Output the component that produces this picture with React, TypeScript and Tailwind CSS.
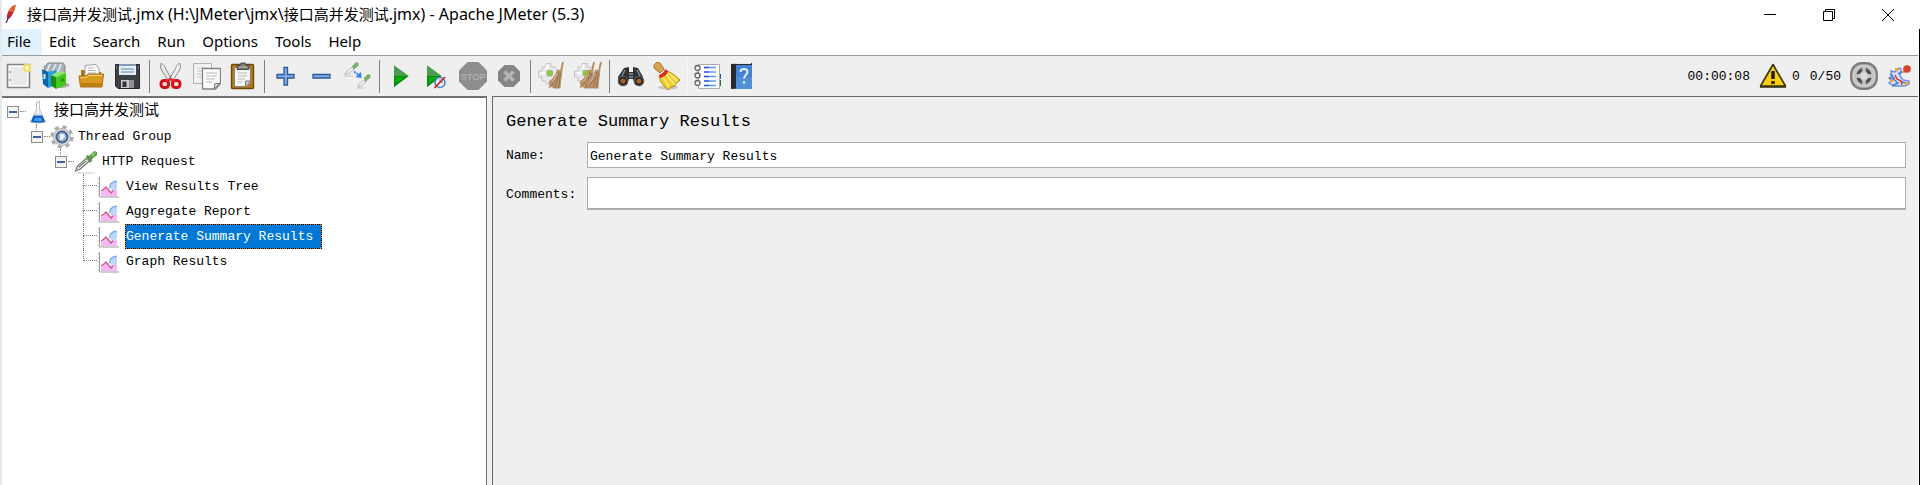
import React from 'react';

const mono = "font-['Liberation_Mono','Noto_Sans_CJK_SC',monospace]";
const sans = "font-['Noto_Sans','Noto_Sans_CJK_SC',sans-serif]";

function Icon({ children }: { children: React.ReactNode }) {
  return (
    <svg viewBox="0 0 28 28" className="h-7 w-7 shrink-0" aria-hidden="true">
      {children}
    </svg>
  );
}

const NewIcon = () => (
  <Icon>
    <path d="M1.500 2.500h22v23h-22z" fill="#f4f4f4" stroke="#858585" strokeWidth="1.600" />
    <path d="M3.500 4.500h18v19h-18z" fill="#e9e9ea" stroke="#fff" />
    <path d="M4 9v2M4 17v2" stroke="#999" strokeWidth="1.500" />
    <circle cx="21" cy="6" r="4.600" fill="#f5eb9a" opacity=".8" />
    <circle cx="21" cy="6" r="2.700" fill="#fffef0" stroke="#efe04e" strokeWidth="1.600" />
  </Icon>
);

const TemplatesIcon = () => (
  <Icon>
    <ellipse cx="18" cy="23" rx="9.500" ry="3" fill="#777" opacity=".55" />
    <path d="M2 5l4-4h15l2 3v9H4z" fill="#a8b2b8" stroke="#7d878c" />
    <path d="M5 9l3-7M10 10l4-8M16 10l3-8" stroke="#e9eef0" strokeWidth="1.600" />
    <path d="M0 7l6 3v16l-5-4z" fill="#0b62a8" />
    <path d="M6 10l8-2v15l-8 3z" fill="#2a9add" />
    <path d="M2.500 12v5" stroke="#d7eefb" strokeWidth="2" />
    <path d="M9 13l5 2v12l-5-4z" fill="#1c8a0e" />
    <path d="M14 15l10-4v12l-10 4z" fill="#43c91d" />
    <path d="M9 13l9-4 6 2-10 4z" fill="#90e66f" />
    <path d="M19 17l3-1v3l-3 1z" fill="#23940e" />
  </Icon>
);

const OpenIcon = () => (
  <Icon>
    <path d="M3 8h5l2 2h13v9H3z" fill="#a8741a" />
    <path d="M7 3.500l11-1 3 4v10H7z" fill="#fafafa" stroke="#a2a2a2" />
    <path d="M10 6h6M10 8.500h8M10 11h8M10 13.500h8" stroke="#b5b5b5" />
    <path d="M1 14h7l2-2h15.500l-1.500 13H2.500z" fill="#d99a22" stroke="#aa7112" />
    <path d="M2.500 15.500h6l2-2H24" stroke="#f7d37c" fill="none" />
    <path d="M3 21h21l-.5 4H3z" fill="#bf8013" />
  </Icon>
);

const SaveIcon = () => (
  <Icon>
    <path d="M1.500 2.500h24v24H4l-2.500-2.500z" fill="#3c4045" stroke="#26282b" />
    <path d="M5 2h17v11H5z" fill="#e7eef5" />
    <path d="M5 2h17v2H5z" fill="#7e9bbd" />
    <path d="M7 7h13M7 10h13" stroke="#88a7c7" strokeWidth="1.400" />
    <path d="M7 18h13v8H7z" fill="#c9c9c9" />
    <path d="M8.500 19.500h4V25h-4z" fill="#303338" />
    <path d="M15 18h5v8h-5z" fill="#8d8f92" />
    <path d="M2.500 4v3M24.500 4v3" stroke="#73777c" />
  </Icon>
);

const CutIcon = () => (
  <Icon>
    <ellipse cx="15" cy="25" rx="10" ry="2" fill="#bbb" opacity=".5" />
    <path d="M4 1.500c2 0 4 3 5 6l6 10-3 2L5 9C3.500 6 3 4 4 1.500z" fill="#e5e7e5" stroke="#898c89" />
    <path d="M23 1.500c-2 0-4 3-5 6l-6 10 3 2L22 9c1.500-3 2-5 1-7.500z" fill="#efefef" stroke="#898c89" />
    <circle cx="13.500" cy="14.500" r="1" fill="#777" />
    <rect x="4" y="18.500" width="7.500" height="7" rx="3" fill="#f3d9d9" stroke="#d01118" strokeWidth="3" />
    <rect x="15.500" y="18.500" width="7.500" height="7" rx="3" fill="#f3d9d9" stroke="#d01118" strokeWidth="3" />
    <path d="M9 19l4.500-2 4.500 2" fill="none" stroke="#e42a2d" strokeWidth="2.500" />
  </Icon>
);

const CopyIcon = () => (
  <Icon>
    <path d="M.5 1.500h18v20H.5z" fill="#f1f1f1" stroke="#b2b2b2" />
    <path d="M4 6h11M4 9h8M4 12h5M4 15h5" stroke="#c9c9c9" />
    <path d="M9.500 6.500h18v15l-5 5.500h-13z" fill="#fafafa" stroke="#858585" strokeWidth="1.300" />
    <path d="M13 11h11M13 14h11M13 17h9M13 20h6" stroke="#b7b7b7" strokeWidth="1.200" />
    <path d="M27 21.500h-5l-1 5.500z" fill="#dcdcd8" stroke="#777" />
  </Icon>
);

const PasteIcon = () => (
  <Icon>
    <rect x="2.500" y="2.500" width="22" height="24" rx="1" fill="#b57a1f" stroke="#714706" strokeWidth="1.400" />
    <path d="M5.500 5.500h16v15l-4 4h-12z" fill="#f5f5f3" stroke="#85857f" />
    <path d="M9 11h9M9 14h9M9 17h7M9 20h4" stroke="#b8b8b4" strokeWidth="1.200" />
    <path d="M21.500 19h-5v5z" fill="#d2d2ce" stroke="#777" />
    <path d="M8 3.500h3L12 1h4l1 2.500h3v4H8z" fill="#777a74" stroke="#484a45" />
    <path d="M10 5h8" stroke="#c7c9c4" />
  </Icon>
);

const PlusIcon = () => (
  <Icon>
    <path d="M12 5.500h3.500v7H22V16h-6.500v7H12v-7H5v-3.500h7z" fill="#86aede" stroke="#29599f" strokeWidth="1.300" />
  </Icon>
);

const MinusIcon = () => (
  <Icon>
    <path d="M5 12.500h17V16H5z" fill="#86aede" stroke="#29599f" strokeWidth="1.300" />
  </Icon>
);

const ToggleIcon = () => (
  <Icon>
    <path d="M0 14h9M13 26h8" stroke="#c4c4c4" />
    <path d="M1 12.500l1-2.500 6-5 2 2-5 4.500z" fill="#eff2ef" stroke="#b8b8b8" />
    <path d="M8 4l1.500-1 2.500-3 2.500 1v2.500L11 6.500l-1 1.500z" fill="#7cac6d" />
    <path d="M14 25l1-3 5-4 2 2-5 4z" fill="#eff2ef" stroke="#b8b8b8" />
    <path d="M19.500 16l1.500-1 3-3 2.500 1v2.500L23 18.500l-1 1.500z" fill="#75b263" />
    <path d="M10 9.500l4 3" stroke="#2d7ff0" strokeWidth="1.800" strokeDasharray="2 1" />
    <path d="M17 10l.5 6-6-1z" fill="#2d7ff0" />
  </Icon>
);

const PlayShape = () => (
  <>
    <path d="M7 3.500L21.500 14 7 25z" fill="#159522" />
    <path d="M7 3.500L21.500 14H7z" fill="#4a9d50" />
    <path d="M7 14h14.500L7 25z" fill="#078a0b" />
    <path d="M8.500 15h9l-9 7z" fill="#0bad12" />
  </>
);

const StartIcon = () => (
  <Icon>
    <PlayShape />
  </Icon>
);

const StartNoPauseIcon = () => (
  <Icon>
    <g transform="translate(-3 0)">
      <PlayShape />
    </g>
    <circle cx="17" cy="20.500" r="5" fill="#e8f0fa" stroke="#5285c2" strokeWidth="1.600" />
    <path d="M17 17v3h3" stroke="#5c86c2" fill="none" />
    <path d="M11.500 26L22 15" stroke="#d32029" strokeWidth="1.800" />
  </Icon>
);

const StopIcon = () => (
  <Icon>
    <path d="M8.500 0h11L28 8.500v11L19.500 28h-11L0 19.500v-11z" fill="#8e8e8e" />
    <text x="14" y="18" textAnchor="middle" fontSize="9" fontWeight="700" fill="#b0b0b0" className="font-['Liberation_Sans',sans-serif]">
      STOP
    </text>
  </Icon>
);

const ShutdownIcon = () => (
  <Icon>
    <path d="M9.500 3h9l6.500 6.500v9L18.500 25h-9L3 18.500v-9z" fill="#858585" />
    <path d="M9.500 9.500l9 9M18.500 9.500l-9 9" stroke="#b4b4b4" strokeWidth="3.600" />
  </Icon>
);

const Gear = () => (
  <>
    <path d="M8 1.500h5V5h4l2 2v9l-3 2-3 1v3H8v-3H4v-4H.5V9H4V5h4z" fill="#e9e9e9" stroke="#c4c4c4" />
    <path d="M9 3v4M3 11h4" stroke="#fff" strokeWidth="2" />
    <rect x="9" y="8.500" width="5.500" height="5.500" rx="1" fill="#86d11a" stroke="#a9aca2" />
  </>
);

const Broom = () => (
  <>
    <path d="M25 0l-2 9" stroke="#b98a56" strokeWidth="1.800" />
    <path d="M19.500 7.500l5 1-1.500 11-.5 7h-7l-1.500-1.500-3.500 1c1-2 1-4 0-6 4-3 7-7 9-12.500z" fill="#b8936a" />
    <path d="M21 10l-4 16M22.500 11l-2 15M19 14l-5.500 10" stroke="#8a6946" strokeWidth=".8" />
    <path d="M19.500 12l-5 8" stroke="#dcbf9f" />
  </>
);

const ClearIcon = () => (
  <Icon>
    <Gear />
    <Broom />
  </Icon>
);

const ClearAllIcon = () => (
  <Icon>
    <Gear />
    <g transform="translate(-5 0)">
      <Broom />
    </g>
    <g transform="translate(2 0)">
      <Broom />
    </g>
  </Icon>
);

const SearchIcon = () => (
  <Icon>
    <path d="M7 6l5-1v5h4V5l5 1 5 9v6l-3 2h-5l-2-6h-4l-2 6H4l-3-2v-6z" fill="#303236" />
    <circle cx="6" cy="19" r="4.500" fill="#17191b" stroke="#55585b" strokeWidth="1.500" />
    <circle cx="22" cy="19" r="4.500" fill="#17191b" stroke="#55585b" strokeWidth="1.500" />
    <circle cx="6" cy="19" r="2.600" fill="#a8602a" />
    <circle cx="22" cy="19" r="2.600" fill="#a8602a" />
    <path d="M8 8L5 14M20 8l3 6M12 12h4M12 15h4" stroke="#8c8f92" strokeWidth="1.400" />
  </Icon>
);

const ResetSearchIcon = () => (
  <Icon>
    <ellipse cx="15" cy="25.500" rx="10" ry="2" fill="#999" opacity=".5" />
    <path d="M1 3l3-3 3 1 4 6-4 4-6-5z" fill="#d9a354" stroke="#aa732b" />
    <path d="M13 9c6 1 9 5 14 9l-4 3-1 3-4 1-3 3C11 24 7 20 6 14z" fill="#efcf2d" stroke="#b18b0c" />
    <path d="M13 12l9 11M16 11l8 8M10 15l6 10" stroke="#fbf08a" strokeWidth="1.300" />
    <path d="M6 13c4-1 5-3 6-6l3 2c-1 4-4 6-8 7z" fill="#dc2626" />
  </Icon>
);

const FunctionIcon = () => (
  <Icon>
    <path d="M24 12h3v5h-3z" fill="#1656c7" />
    <path d="M24 18h3v6h-3z" fill="#138424" />
    <path d="M4.500 2.500h21v24h-21z" fill="#fbfbfb" stroke="#aaa" />
    {[5.5, 10, 14.5, 19, 23.5].map((y) => (
      <g key={y}>
        <path d={`M10 ${y}h5`} stroke="#1e50d0" strokeWidth="1.500" />
        <path d={`M15 ${y}h7`} stroke="#5b9cf0" strokeWidth="1.500" />
      </g>
    ))}
    {[6, 13.5, 21].map((y) => (
      <circle key={y} cx="3.500" cy={y} r="2.500" fill="#eee" stroke="#656565" strokeWidth="1.300" />
    ))}
  </Icon>
);

const HelpIcon = () => (
  <Icon>
    <path d="M1 2l21-1v25l-21 1z" fill="#27292e" />
    <path d="M6 3h16v24H6z" fill="#4383d1" />
    <path d="M6 1.500h15" stroke="#e6e6e6" />
    <path d="M6 15h16v12H6z" fill="#528fd9" />
    <path d="M10.500 10c0-4 7-4 7 0 0 3-3.500 3-3.500 6.500M14 19v2.500" fill="none" stroke="#e8f1fb" strokeWidth="1.900" />
  </Icon>
);

const WarningIcon = () => (
  <Icon>
    <path d="M14 2.500L26.500 24h-25z" fill="#f6cd12" stroke="#3b3508" strokeWidth="1.600" strokeLinejoin="round" />
    <path d="M1 25h26" stroke="#282407" strokeWidth="1.500" />
    <path d="M14 9v8M14 19v3" stroke="#1c1c1c" strokeWidth="3.400" />
  </Icon>
);

const ThreadsIcon = () => (
  <Icon>
    <rect x="1" y="1" width="26" height="26" rx="11" fill="#a4a4a4" stroke="#7a7a7a" strokeWidth="1.800" />
    <rect x="3.500" y="3.500" width="21" height="21" rx="9" fill="#c4c4c4" stroke="#dcdcdc" />
    <path d="M7 12c.5-2.500 2-4.500 5-5.500l-.5 3-2 2zM16 6.500c3 1 4.500 3 5 5.500l-3-.5-1.500-2zM21 16c-.5 2.500-2 4.500-5 5.500l.5-3 2-2zM12 21.500c-3-1-4.500-3-5-5.500l3 .5 1.500 2z" fill="#4b4b4b" stroke="#4b4b4b" strokeWidth=".8" />
    <circle cx="14" cy="14" r="3.500" fill="#dcdcdc" />
  </Icon>
);

const RemoteIcon = () => (
  <Icon>
    <path d="M5 9l4 1 4-4 2 1-1 7 3 4 6 1v3l-4 2H8l-5-3 3-3-3-2 3-2z" fill="#d3e0f6" stroke="#6b92dc" strokeWidth="1.400" />
    <path d="M3 17l5-1-4-4M6 24l6-3-6-5M12 12l6-3M15 20l6 1" stroke="#4a78d2" strokeWidth="1.400" fill="none" />
    <path d="M9 13l2 4 4 2 1 4" stroke="#db353b" strokeWidth="1.400" fill="none" />
    <path d="M9 6h3v3H9zM19 20h3v3h-3zM4 17h3v3H4zM16 9h3v2h-3z" fill="#eda23c" />
    <circle cx="21" cy="7" r="3.800" fill="#d44431" />
  </Icon>
);

const Feather = () => (
  <svg viewBox="0 0 14 22" className="h-[22px] w-[14px]" aria-hidden="true">
    <path d="M4 19l2-4" stroke="#5b2766" strokeWidth="1.200" />
    <path d="M5 16V11l1.500-4L10 2.500l3.500-2-.5 4-2 5-2.500 4z" fill="#c3253b" />
    <path d="M6.500 7L10 2.500l3.500-2-.5 4-1.500 4z" fill="#e8622c" />
    <path d="M5 16v-4l3 1z" fill="#83236b" />
  </svg>
);

function TreeIcon({ children }: { children: React.ReactNode }) {
  return (
    <svg viewBox="0 0 24 24" className="relative h-6 w-6 shrink-0" aria-hidden="true">
      {children}
    </svg>
  );
}

const FlaskIcon = () => (
  <TreeIcon>
    <ellipse cx="12" cy="21.500" rx="8.500" ry="1.800" fill="#aeb6c0" />
    <path d="M10.500 2l3-1v8l5 12-2 1.500h-9l-2-1.500 5-12z" fill="#dce4ea" stroke="#b0bac1" strokeWidth=".8" />
    <path d="M7.500 15.500h9l2.500 5.500-2 1.500H7L5 21z" fill="#1763c7" />
    <path d="M9 18h6l1 3H8z" fill="#3ea2ef" />
    <path d="M12 3v10" stroke="#fff" strokeWidth="1.200" />
  </TreeIcon>
);

const GearIcon = () => (
  <TreeIcon>
    <circle cx="12" cy="12" r="9.800" fill="none" stroke="#ababab" strokeWidth="3.500" strokeDasharray="4.100 3.600" />
    <circle cx="12" cy="12" r="8.500" fill="#d8d8d8" stroke="#b4b4b4" />
    <circle cx="12" cy="12" r="5.600" fill="#94add0" stroke="#43618c" strokeWidth="1.800" />
    <path d="M10 9h4l1 3-3 3h-2z" fill="#edf3fa" />
  </TreeIcon>
);

const PipetteIcon = () => (
  <TreeIcon>
    <path d="M2 23h19" stroke="#ccc" />
    <path d="M1.500 21l2-5 9-8 3 3-9 8z" fill="#d9dcd9" stroke="#777" strokeWidth="1.200" />
    <path d="M5 17l7-6" stroke="#555" />
    <path d="M12 6l2-1 1 1 5-5 3 1v3l-5 4v2l-2 2z" fill="#58984a" />
    <path d="M17 5l3-3 2 1-3 4z" fill="#83c96d" />
  </TreeIcon>
);

const ChartIcon = () => (
  <TreeIcon>
    <path d="M2.500 2v20H22" fill="none" stroke="#999" />
    <path d="M.5 4h2M.5 8h2M.5 12h2M.5 16h2M.5 20h2" stroke="#bbb" />
    <path d="M4 17l5-4 5 6 4-7 2 3v6H4z" fill="#f6b8f3" />
    <path d="M4 16l3-2 2-2 5 6 5-6" fill="none" stroke="#cf5a90" strokeWidth="1.500" />
    <path d="M13 9l4-3h3v7l-3 3-3-1z" fill="#bcd7f8" />
    <path d="M12.500 13.500l1-4.500L17 6.500h3" fill="none" stroke="#7eaaf0" strokeWidth="1.300" />
  </TreeIcon>
);

function ToolButton({ label, children }: { label: string; children: React.ReactNode }) {
  return (
    <button type="button" aria-label={label} className="flex h-9 w-9 items-center justify-center">
      {children}
    </button>
  );
}

const toolGroups: { label: string; icon: React.ReactNode }[][] = [
  [
    { label: 'New', icon: <NewIcon /> },
    { label: 'Templates', icon: <TemplatesIcon /> },
    { label: 'Open', icon: <OpenIcon /> },
    { label: 'Save', icon: <SaveIcon /> },
  ],
  [
    { label: 'Cut', icon: <CutIcon /> },
    { label: 'Copy', icon: <CopyIcon /> },
    { label: 'Paste', icon: <PasteIcon /> },
  ],
  [
    { label: 'Expand All', icon: <PlusIcon /> },
    { label: 'Collapse All', icon: <MinusIcon /> },
    { label: 'Toggle', icon: <ToggleIcon /> },
  ],
  [
    { label: 'Start', icon: <StartIcon /> },
    { label: 'Start no pauses', icon: <StartNoPauseIcon /> },
    { label: 'Stop', icon: <StopIcon /> },
    { label: 'Shutdown', icon: <ShutdownIcon /> },
  ],
  [
    { label: 'Clear', icon: <ClearIcon /> },
    { label: 'Clear All', icon: <ClearAllIcon /> },
  ],
  [
    { label: 'Search', icon: <SearchIcon /> },
    { label: 'Reset Search', icon: <ResetSearchIcon /> },
  ],
  [
    { label: 'Function Helper', icon: <FunctionIcon /> },
    { label: 'Help', icon: <HelpIcon /> },
  ],
];

const branches = [
  { label: '接口高并发测试', icon: <FlaskIcon />, indent: 'pl-[5px]', text: 'text-[15px]' },
  { label: 'Thread Group', icon: <GearIcon />, indent: 'pl-[29px]', text: 'text-[13px]' },
  { label: 'HTTP Request', icon: <PipetteIcon />, indent: 'pl-[53px]', text: 'text-[13px]' },
];

const leaves = ['View Results Tree', 'Aggregate Report', 'Generate Summary Results', 'Graph Results'];

export default function App() {
  return (
    <div className={`flex min-h-screen flex-col border-l-2 border-[#e6e8ec] bg-white text-black ${sans}`}>
      <header className="flex h-[29px] items-center">
        <Feather />
        <h1 className="grow pb-0.5 pl-[11px] text-[16px] leading-6">
          <span className="text-[15px]">接口高并发测试</span>.jmx (H:\JMeter\jmx\
          <span className="text-[15px]">接口高并发测试</span>.jmx) - Apache JMeter (5.3)
        </h1>
        <div className="mr-[3px] flex">
          <button type="button" aria-label="Minimize" className="flex h-7 w-[59px] items-center justify-center">
            <svg viewBox="0 0 12 12" className="h-3 w-3"><path d="M0 5.500h12" stroke="#000" /></svg>
          </button>
          <button type="button" aria-label="Restore" className="flex h-7 w-[59px] items-center justify-center">
            <svg viewBox="0 0 12 12" className="h-3 w-3"><path d="M.5 2.500h9v9h-9zM2.500 2.500v-2h9v9h-2" fill="none" stroke="#000" /></svg>
          </button>
          <button type="button" aria-label="Close" className="flex h-7 w-[59px] items-center justify-center">
            <svg viewBox="0 0 12 12" className="h-3 w-3"><path d="M0 0l12 12M12 0L0 12" stroke="#000" /></svg>
          </button>
        </div>
      </header>

      <div className="flex grow flex-col border-r border-black">
        <nav className="flex h-[26px] text-[15px] leading-6">
          {['File', 'Edit', 'Search', 'Run', 'Options', 'Tools', 'Help'].map((item) => (
            <button
              key={item}
              type="button"
              className={item === 'File' ? 'bg-[#e2f2ff] pr-[11px] pb-[3px] pl-[5px]' : 'pr-[10px] pb-[3px] pl-[7px]'}
            >
              {item}
            </button>
          ))}
        </nav>

        <div className="mr-px flex h-[41px] items-center border-t border-[#9a9a9a] bg-[#efefef]">
          {toolGroups.map((group, i) => (
            <React.Fragment key={group[0].label}>
              {i > 0 && (
                <span
                  className={
                    i === toolGroups.length - 1 ? 'mx-0.5 h-[33px] w-px bg-[#f8f8f8]' : 'mx-[3px] h-[33px] w-px bg-[#808080]'
                  }
                />
              )}
              {group.map((tool) => (
                <ToolButton key={tool.label} label={tool.label}>
                  {tool.icon}
                </ToolButton>
              ))}
            </React.Fragment>
          ))}
          <div className={`ml-auto flex items-center pr-1 text-[13px] ${mono}`}>
            <span className="pt-0.5">00:00:08</span>
            <button type="button" aria-label="Warnings" className="ml-[9px]"><WarningIcon /></button>
            <span className="ml-[5px] pt-0.5">0</span>
            <span className="ml-[10px] pt-0.5">0/50</span>
            <span className="ml-[9px]"><ThreadsIcon /></span>
            <span className="ml-2"><RemoteIcon /></span>
          </div>
        </div>

        <main className="mr-px flex grow bg-[#efefef]">
          <aside className="w-[485px] shrink-0 border-t-2 border-r border-[#6e6e74] bg-white pt-px">
            <ul className={mono}>
              {branches.map((row, i) => (
                <li key={row.label} className={`flex h-[25px] items-center ${row.indent}`}>
                  <button
                    type="button"
                    aria-label={`Collapse ${row.label}`}
                    className="flex h-3 w-3 items-center justify-center border border-[#8c8c8c] bg-[#f3f3f3]"
                  >
                    <span className="h-0.5 w-2 bg-[#3c5fa8]" />
                  </button>
                  <span className="ml-px w-[6px] border-t border-dotted border-[#808080]" />
                  <span className="relative flex">
                    {i < 2 && <span className="absolute top-6 left-[10px] h-2 border-l border-dotted border-[#808080]" />}
                    {row.icon}
                  </span>
                  <button type="button" className={`ml-1 pt-px leading-6 whitespace-pre ${row.text}`}>
                    {row.label}
                  </button>
                </li>
              ))}
              {leaves.map((label, i) => (
                <li key={label} className="flex h-[25px] items-center pl-[81px]">
                  <span className="flex h-full w-[14px] flex-col">
                    <span className="h-3 border-b border-l border-dotted border-[#808080]" />
                    {i < leaves.length - 1 && <span className="grow border-l border-dotted border-[#808080]" />}
                  </span>
                  <ChartIcon />
                  <button
                    type="button"
                    className={
                      label === 'Generate Summary Results'
                        ? 'ml-1 h-[25px] border border-dashed border-[#ff8a22] bg-[#0078d7] pr-2 text-[13px] whitespace-pre text-white outline-1 -outline-offset-1 outline-dotted outline-black'
                        : 'ml-1 h-[25px] border border-transparent pr-2 text-[13px] whitespace-pre'
                    }
                  >
                    {label}
                  </button>
                </li>
              ))}
            </ul>
          </aside>

          <section className={`ml-[5px] grow border-t border-l border-[#6a6a6a] pt-[13px] pr-3 pl-[13px] ${mono}`}>
            <h2 className="text-[17px] leading-6">Generate Summary Results</h2>
            <form className="mt-2 grid grid-cols-[73px_1fr] items-center gap-x-2 gap-y-[9px] text-[13px]">
              <label htmlFor="name" className="pt-0.5">Name:</label>
              <input
                id="name"
                defaultValue="Generate Summary Results"
                className="h-[26px] w-full border border-[#abadb3] bg-white px-0.5 pt-0.5 outline-none"
              />
              <label htmlFor="comments" className="pt-0.5">Comments:</label>
              <input
                id="comments"
                className="h-[33px] w-full border border-b-2 border-[#abadb3] bg-white px-0.5 outline-none"
              />
            </form>
          </section>
        </main>
      </div>
    </div>
  );
}
